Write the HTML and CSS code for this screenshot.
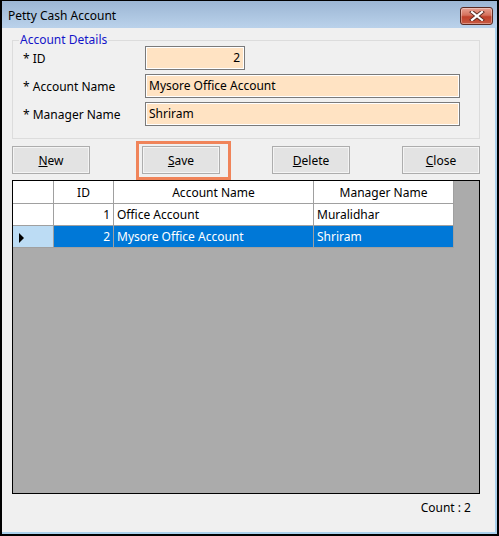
FILE: index.html
```html
<!DOCTYPE html>
<html>
<head>
<meta charset="utf-8">
<link rel="stylesheet" href="styles.css">
</head>
<body>
<div class="window">
  <div class="titlebar">
    <span class="title">Petty Cash Account</span>
    <div class="close-btn">
      <svg width="16" height="10" viewBox="0 0 16 10"><path d="M3 1 L13 9 M13 1 L3 9" stroke="#5a2a22" stroke-width="4" stroke-linecap="square"/><path d="M3 1 L13 9 M13 1 L3 9" stroke="#fff" stroke-width="2.2" stroke-linecap="square"/></svg>
    </div>
  </div>
  <div class="client">
    <fieldset class="group">
      <legend>Account Details</legend>
      <div class="row">
        <label>* ID</label>
        <div class="input small num">2</div>
      </div>
      <div class="row">
        <label>* Account Name</label>
        <div class="input wide">Mysore Office Account</div>
      </div>
      <div class="row">
        <label>* Manager Name</label>
        <div class="input wide">Shriram</div>
      </div>
    </fieldset>
    <div class="buttons">
      <div class="btn"><u>N</u>ew</div>
      <div class="btn highlighted"><u>S</u>ave</div>
      <div class="btn"><u>D</u>elete</div>
      <div class="btn"><u>C</u>lose</div>
    </div>
    <div class="grid">
      <table>
        <tr class="head">
          <td class="rh"></td><td class="c-id">ID</td><td class="c-acc">Account Name</td><td class="c-mgr">Manager Name</td>
        </tr>
        <tr>
          <td class="rh"></td><td class="r">1</td><td>Office Account</td><td>Muralidhar</td>
        </tr>
        <tr class="sel">
          <td class="rh"><span class="arrow"></span></td><td class="r">2</td><td>Mysore Office Account</td><td>Shriram</td>
        </tr>
      </table>
    </div>
    <div class="count">Count : 2</div>
  </div>
</div>
</body>
</html>
```

FILE: styles.css
```css
html, body {
  margin: 0;
  padding: 0;
  background: #f0f0f0;
}
body {
  font-family: "Noto Sans", "DejaVu Sans", sans-serif;
  font-size: 12px;
  color: #000;
}
.window {
  width: 499px;
  height: 536px;
  box-sizing: border-box;
  border: 1px solid #000;
  border-left-width: 2px;
  border-right-width: 2px;
  border-bottom-width: 2px;
  background: #f0f0f0;
  display: flex;
  flex-direction: column;
  position: relative;
}
.window::after {
  content: "";
  position: absolute;
  left: 0; right: 0; bottom: 0; top: 26px;
  border-right: 2px solid #aad0ec;
  border-bottom: 2px solid #aad0ec;
  pointer-events: none;
}
.titlebar {
  height: 26px;
  flex: none;
  background: linear-gradient(#9cb6d4, #b9d1ea);
  display: flex;
  align-items: center;
  justify-content: space-between;
  padding: 0 4px 0 6px;
  border-bottom: 1px solid #b9d1ea;
}
.title {
  font-size: 12px;
  color: #000;
  margin-top: 2px;
}
.close-btn {
  width: 31px;
  height: 16px;
  margin-top: 3px;
  border: 1px solid #5a2a22;
  border-radius: 3px;
  background: linear-gradient(#e8a293 0%, #d5715c 45%, #c0402a 55%, #c75a42 100%);
  display: flex;
  align-items: center;
  justify-content: center;
  box-shadow: inset 0 0 0 1px rgba(255,255,255,0.35);
}
.client {
  flex: 1;
  display: flex;
  flex-direction: column;
  padding: 5px 17px 0 10px;
}
.group {
  margin: 0;
  padding: 0 0 8px 10px;
  border: 1px solid #dcdcdc;
  height: 106px;
  box-sizing: border-box;
}
.group legend {
  color: #1414c8;
  padding: 0 1px;
  margin-left: -4px;
  font-size: 12px;
  line-height: 14px;
}
.row {
  display: flex;
  align-items: center;
  height: 24px;
  margin-bottom: 4px;
}
.row:first-of-type {
  margin-top: -1px;
}
.row label {
  width: 122px;
}
.input {
  height: 24px;
  box-sizing: border-box;
  border: 1px solid #7a7a7a;
  box-shadow: inset 0 0 0 1px #fff;
  background: #ffe3c3;
  padding: 0 3px;
  line-height: 21px;
  font-size: 12px;
}
.input.small { width: 100px; }
.input.num { text-align: right; padding-right: 4px; }
.input.wide { width: 315px; }
.buttons {
  display: flex;
  gap: 52px;
  align-items: center;
  margin-top: 7px;
  height: 28px;
}
.btn {
  width: 78px;
  height: 28px;
  box-sizing: border-box;
  border: 1px solid #adadad;
  background: #e3e3e3;
  box-shadow: inset 0 0 0 1px #f4f4f4;
  display: flex;
  align-items: center;
  justify-content: center;
  font-size: 12px;
}
.btn.highlighted {
  position: relative;
}
.btn.highlighted::after {
  content: "";
  position: absolute;
  left: -7px;
  right: -12px;
  top: -6px;
  bottom: -7px;
  border: 3px solid #f0845a;
  pointer-events: none;
}
.grid {
  margin-top: 6px;
  height: 314px;
  box-sizing: border-box;
  border: 1px solid #000;
  background: #ababab;
  flex: none;
}
.grid table {
  border-collapse: collapse;
  background: #fff;
}
.grid td {
  border: 1px solid #a0a0a0;
  height: 21px;
  padding: 0 3px;
  font-size: 12px;
  white-space: nowrap;
}
.grid tr:first-child td { border-top: none; }
.grid td:first-child { border-left: none; }
.grid .head td {
  height: 22px;
  text-align: center;
  background: #fff;
}
.grid .rh { width: 34px; }
.grid .c-id { width: 53px; }
.grid .c-acc { width: 193px; }
.grid .c-mgr { width: 133px; }
.grid .r { text-align: right; }
.grid .sel td {
  background: #0078d7;
  color: #fff;
}
.grid .sel td.rh {
  background: #bcdcf4;
}
.arrow {
  display: inline-block;
  width: 0;
  height: 0;
  border-top: 5px solid transparent;
  border-bottom: 5px solid transparent;
  border-left: 5px solid #000;
  margin-left: 3px;
  vertical-align: middle;
}
.count {
  text-align: right;
  margin-top: 5px;
  padding-right: 9px;
}
```
